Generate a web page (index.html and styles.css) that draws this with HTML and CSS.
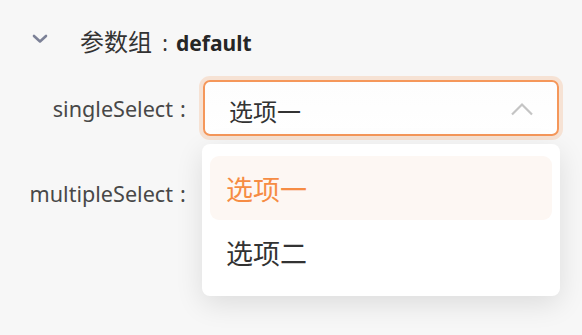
FILE: index.html
```html
<!DOCTYPE html>
<html lang="zh">
<head>
<meta charset="utf-8">
<link rel="stylesheet" href="styles.css">
</head>
<body>
<div class="panel">
  <div class="group-head">
    <svg class="chevron" width="16" height="10" viewBox="0 0 16 10"><polyline points="2,2 8,7.5 14,2" fill="none" stroke="#7c8197" stroke-width="2.6" stroke-linecap="round" stroke-linejoin="round"/></svg>
    <span class="group-title"><span class="cn">参数组</span><span class="colon title-colon">:</span><b>default</b></span>
  </div>
  <div class="form">
    <div class="form-row">
      <label class="form-label">singleSelect<span class="colon">:</span></label>
      <div class="select-wrap">
        <div class="select is-open">
          <span class="select-value">选项一</span>
          <svg class="arrow" width="24" height="14" viewBox="0 0 24 14"><polyline points="2,12.5 12,2.5 22,12.5" fill="none" stroke="#c4c4c4" stroke-width="2.2"/></svg>
        </div>
        <div class="dropdown">
          <div class="option selected">选项一</div>
          <div class="option">选项二</div>
        </div>
      </div>
    </div>
    <div class="form-row">
      <label class="form-label">multipleSelect<span class="colon">:</span></label>
      <div class="select-wrap">
        <div class="select"></div>
      </div>
    </div>
  </div>
</div>
</body>
</html>
```

FILE: styles.css
```css
html {
  height: 100%;
  background: #f7f7f7;
}
body {
  margin: 0;
  min-height: 100%;
  background: #f7f7f7;
  font-family: "Noto Sans", "Noto Sans CJK SC", sans-serif;
  color: #333;
}
.panel {
  padding-top: 26px;
  min-height: 309px;
}
.group-head {
  display: flex;
  align-items: center;
  height: 32px;
  padding-left: 32px;
}
.chevron {
  display: block;
  margin-top: -6px;
}
.group-title {
  margin-left: 32px;
  font-size: 21px;
  color: #333;
  line-height: 32px;
}
.group-title .cn {
  font-family: "Noto Sans CJK SC", sans-serif;
  font-size: 24px;
}
.group-title b {
  font-weight: 700;
  color: #262626;
}
.colon {
  display: inline-block;
  text-align: center;
  width: 20px;
}
.title-colon {
  width: 24px;
  padding-left: 2px;
  box-sizing: border-box;
}
.form {
  margin-top: 22px;
}
.form-row {
  display: flex;
  align-items: center;
  height: 56px;
}
.form-row + .form-row {
  margin-top: 29px;
}
.form-label {
  width: 193px;
  text-align: right;
  font-size: 21.6px;
  color: #484848;
  white-space: nowrap;
}
.select-wrap {
  position: relative;
  margin-left: 10px;
  width: 356px;
}
.select {
  box-sizing: border-box;
  height: 56px;
  border: 1.5px solid #dcdcdc;
  border-radius: 7px;
  background: linear-gradient(#ffffff, #fbfbfb);
  display: flex;
  align-items: center;
  justify-content: space-between;
  padding: 0 23px 0 24px;
}
.select.is-open {
  border: 2px solid #f5975a;
  box-shadow: 0 0 0 4px rgba(247, 145, 75, 0.2);
  background: linear-gradient(#fdfdfd, #ffffff);
}
.select-value {
  font-family: "Noto Sans CJK SC", sans-serif;
  font-size: 24px;
  color: #333;
  margin-top: 4px;
}
.arrow {
  display: block;
  margin-top: 2px;
}
.dropdown {
  position: absolute;
  z-index: 2;
  top: calc(100% + 8px);
  left: -1px;
  right: -1px;
  box-sizing: border-box;
  padding: 12px 8px;
  background: #fff;
  border-radius: 8px;
  box-shadow: 0 8px 28px rgba(0, 0, 0, 0.11);
}
.option {
  height: 64px;
  display: flex;
  align-items: center;
  padding-left: 16px;
  border-radius: 9px;
  font-family: "Noto Sans CJK SC", sans-serif;
  font-size: 27px;
  color: #333;
}
.option.selected {
  background: #fdf7f3;
  color: #f68c44;
}
```
